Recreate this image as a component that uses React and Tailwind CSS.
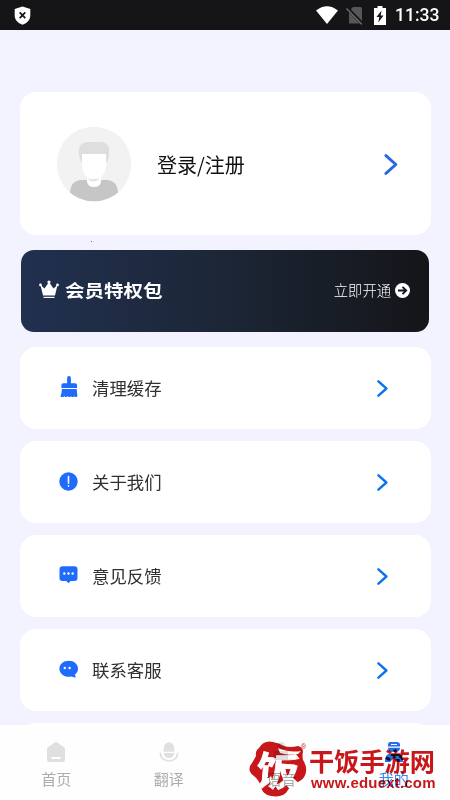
const rows = [
  { label: "清理缓存", icon: BroomIcon },
  { label: "关于我们", icon: AboutIcon },
  { label: "意见反馈", icon: FeedbackIcon },
  { label: "联系客服", icon: ServiceIcon },
];

const tabs = [
  { label: "首页", icon: HomeIcon },
  { label: "翻译", icon: MicIcon },
  { label: "语音", icon: VoiceIcon },
  { label: "我的", icon: UserIcon, active: true },
];

function BroomIcon() {
  return (
    <svg className="h-[22px] w-[18px]" viewBox="0 0 19 22" fill="#1f6bfb">
      <path d="M7.500 1.500a2 2 0 0 1 4 0V7H16a2 2 0 0 1 2 2v3H1.500V9a2 2 0 0 1 2-2h4Z" />
      <path d="M2 13.200h15.600l.7 7q0 1.300-1 1.300h-1.600l-.7-1-.8 1h-2l-.7-1-.7 1h-2l-.7-1-.8 1h-2l-.7-1-.8 1H1.500Q.2 21.500.6 20.200 2 17.500 2 13.200Z" />
    </svg>
  );
}

function AboutIcon() {
  return (
    <svg className="size-[19px]" viewBox="0 0 19 19">
      <circle cx="9.500" cy="9.500" r="9.200" fill="#1f6bfb" />
      <path d="M9.500 4.500v6.800M9.500 13.700v.6" stroke="#fff" strokeWidth="1.600" strokeLinecap="round" />
    </svg>
  );
}

function FeedbackIcon() {
  return (
    <svg className="h-[18px] w-[19px]" viewBox="0 0 19 18">
      <path d="M3.500.3h12a3 3 0 0 1 3 3V12a3 3 0 0 1-3 3h-3.800l-2.200 2.300L7.300 15H3.500a3 3 0 0 1-3-3V3.300a3 3 0 0 1 3-3Z" fill="#1f6bfb" />
      <g fill="#fff">
        <circle cx="5.300" cy="7.500" r="1.200" />
        <circle cx="9.500" cy="7.500" r="1.200" />
        <circle cx="13.700" cy="7.500" r="1.200" />
      </g>
    </svg>
  );
}

function ServiceIcon() {
  return (
    <svg className="h-[19px] w-5" viewBox="0 0 20 19">
      <path d="M9.800.7c5.200 0 9.200 3.500 9.200 8 0 2.500-1.100 4.300-3 5.800l.7 3.200-4.300-1.200c-6.300 1.300-12-2.500-12-7.800C.4 4.200 4.600.7 9.800.7Z" fill="#1f6bfb" />
      <circle cx="5.800" cy="8" r="1.200" fill="#fff" />
      <circle cx="10.600" cy="8" r="1.200" fill="#fff" />
    </svg>
  );
}

function HomeIcon() {
  return (
    <svg className="h-5 w-[18px]" viewBox="0 0 18 20">
      <path d="M7.700.6q1.300-.8 2.600 0l6.400 4.300q1.300.9 1.300 2.400v10.200q0 2.500-2.500 2.500h-13Q0 20 0 17.500V7.300q0-1.500 1.300-2.400Z" fill="#e0e0e0" />
      <rect x="4.300" y="15" width="9.400" height="2" fill="#fff" />
    </svg>
  );
}

function MicIcon() {
  return (
    <svg className="h-5 w-5" viewBox="0 0 20 20">
      <path d="M4.700 9.700V6a5.300 5.700 0 0 1 10.600 0v3.700ZM4.700 11h10.600q-.6 5-5.300 5t-5.300-5Z" fill="#e0e0e0" />
      <path d="M1.300 10.800q.5 8 8.700 8.200 8.200-.2 8.700-8.200" fill="none" stroke="#e0e0e0" strokeWidth="1.700" />
    </svg>
  );
}

function VoiceIcon() {
  return (
    <svg className="h-5 w-5" viewBox="0 0 20 20" fill="#dedede">
      <circle cx="10" cy="4" r="4" />
      <path d="M3 9h14v9H3z" />
    </svg>
  );
}

function UserIcon() {
  return (
    <svg className="h-5 w-[18px]" viewBox="0 0 18 20">
      <path d="M5 0h7q2.500 0 3 2v2.500H3V2q.5-2 2-2ZM3 5.700h12q.3 4.300-6 4.300T3 5.700Z" fill="#256fec" />
      <path d="M6 2.500h6" stroke="#fff" strokeWidth="1" />
      <path d="M3.500 12h11q3.500 1.500 3.500 7v1h-5l-4-4-4 4H0v-1q0-5.500 3.500-7Z" fill="#256fec" />
    </svg>
  );
}

function Chevron({ className }) {
  return (
    <svg className={className} viewBox="0 0 13 20" fill="none" stroke="currentColor" strokeWidth="2.800" strokeLinecap="round" strokeLinejoin="round">
      <path d="m1.700 1.500 9.400 8.500-9.400 8.500" />
    </svg>
  );
}

function StatusBar() {
  return (
    <header className="flex h-[30px] shrink-0 items-center bg-[#151517] pr-[10px] pl-[14px] text-white">
      <svg className="mr-auto h-[19px] w-[17px]" viewBox="0 0 17 19">
        <path d="M8.500.4 16.300 3v6.500c0 4.300-3.100 7.600-7.800 9.200-4.700-1.600-7.800-4.900-7.800-9.200V3Z" fill="#fff" />
        <path d="m5.700 6.300 5.600 5.800m0-5.800-5.600 5.800" stroke="#151517" strokeWidth="1.700" />
      </svg>
      <svg className="mr-[8px] h-[18px] w-[22px]" viewBox="0 0 22 18">
        <path d="M0 4.500q11-8.500 22 0L11 18Z" fill="#fff" />
      </svg>
      <svg className="mr-[10px] h-[19px] w-[18px]" viewBox="0 0 18 19">
        <path d="M7 1h7.500Q16 1 16 2.500v15H3V5Z" fill="#57575a" />
        <path d="m1 2 15.500 16" stroke="#151517" strokeWidth="3.500" />
        <path d="m.5 2.500 15.500 16" stroke="#6a6a6c" strokeWidth="1.400" />
      </svg>
      <svg className="mr-[9px] h-[19px] w-3" viewBox="0 0 12 19">
        <path d="M3.500 0h5v2H12v17H0V2h3.500Z" fill="#fff" />
        <path d="M7.500 4.500 2.500 11h2.800l-1 5.500 5.200-7H6.700Z" fill="#151517" />
      </svg>
      <span className="w-[45px] pt-[2px] font-[Roboto] text-[17.500px] leading-none font-medium whitespace-nowrap">11:33</span>
    </header>
  );
}

function Avatar() {
  return (
    <svg className="size-[76px]" viewBox="0 0 76 76">
      <clipPath id="avatar">
        <circle cx="38" cy="38" r="37.300" />
      </clipPath>
      <g clipPath="url(#avatar)">
        <path d="M0 0h76v76H0Z" fill="#f2f2f2" />
        <path d="M25 36q-3-8-2-13 1-7 10-7h11q9 0 9 8 .5 6-1.500 12Z" fill="#dedede" />
        <path d="M14 76V66q1-11 10-12h28q9 1 10 12v10Z" fill="#c6c6c6" />
        <path d="M31 49h14v7q-1 5-7 5t-7-5Z" fill="#fff" />
        <path d="M32 52q6 3 12-1l-2 3q-5 3-9 0Z" fill="#e3e3e3" />
        <path d="M26 28h24v11q-1 14-12 14T26 39Z" fill="#fff" />
      </g>
    </svg>
  );
}

function Watermark() {
  return (
    <div className="absolute top-[14px] left-[249px] flex h-[59px] w-[195px] mix-blend-multiply">
      <svg className="h-[58px] w-[60px] shrink-0 overflow-visible" viewBox="0 0 60 58">
        <path d="M10 9Q15 1 24 3q6 1 11 4 6 2 14 0 5 1 5 6-1 3 0 8 4 6 3 12-1 7-8 10-7 3-10 8-4 8-17 6-8-1-10-9-2-7-7-11-6-4-4-10 4-6 6-10-1-5 3-8Z" fill="#c9171b" />
        <path d="M29 9q12 5 23 3l-3 3q-10 2-18-1Z" fill="#fff" />
        <path d="M43 38q6 5 12 12-7 0-15-7Z" fill="#fff" />
        <text x="8" y="47" fill="#fff" stroke="#fff" strokeWidth=".8" fontSize="39" fontWeight="700" fontFamily="Noto Sans CJK SC, sans-serif" transform="rotate(5 30 30)" textLength="43" lengthAdjust="spacingAndGlyphs">饭</text>
        <text x="52" y="10" fill="#c9171b" fontSize="7" fontFamily="Liberation Sans, sans-serif">®</text>
      </svg>
      <div className="flex flex-col text-[#c9171b]">
        <span className="mt-[7px] text-[25.200px] leading-[28px] font-bold whitespace-nowrap">干饭手游网</span>
        <span className="ml-[2px] font-['Liberation_Sans'] text-[15px] leading-[18px] font-bold tracking-[0.200px]">www.eduext.com</span>
      </div>
    </div>
  );
}

export default function App() {
  return (
    <div className="flex h-[800px] w-[450px] flex-col overflow-hidden bg-[#f2f3fe] font-['Noto_Sans_CJK_SC',sans-serif]">
      <StatusBar />

      <main className="min-h-0 flex-1 overflow-hidden pt-[62px] pr-[19px] pl-5">
        <section className="flex h-[143px] items-center rounded-[16px] bg-white pr-[33px] pl-9">
          <Avatar />
          <span className="ml-[25px] pt-[2px] text-[20px] text-[#111]">登录/注册</span>
          <Chevron className="mt-[2px] ml-auto h-[21px] w-[14px] text-[#2468e8]" />
        </section>
        <div className="mt-[6px] ml-[71px] size-px bg-gray-500" />

        <section className="mr-[2px] ml-px mt-[8px] flex h-[82px] items-center rounded-[13px] bg-linear-to-r from-[#20304f] via-[#1c2636] to-[#141519] pr-[19px] pb-[2px] pl-[18px] text-white">
          <svg className="-mt-[2px] h-[19px] w-5" viewBox="0 0 20 19" fill="#fff">
            <path d="m1.500 5 4 3.500L10 2l4.500 6.500 4-3.500L16 15.500H4Z" />
            <circle cx="1.500" cy="5" r="1.400" />
            <circle cx="10" cy="2" r="1.600" />
            <circle cx="18.500" cy="5" r="1.400" />
            <path d="M4.500 16.800h11V18h-11Z" />
          </svg>
          <span className="ml-[6px] origin-center scale-y-90 text-[19.500px] leading-none font-bold">会员特权包</span>
          <span className="ml-auto text-[14.300px] font-light">立即开通</span>
          <svg className="ml-[4px] size-[15px]" viewBox="0 0 15 15">
            <circle cx="7.500" cy="7.500" r="7.500" fill="#fff" />
            <path d="M3 7.500h8M7.500 3.800l3.700 3.700-3.700 3.700" fill="none" stroke="#15171c" strokeWidth="1.900" />
          </svg>
        </section>

        <div className="mt-[15px] flex flex-col gap-[12.500px]">
          {rows.map(({ label, icon: Icon }) => (
            <div key={label} className="flex h-[81.500px] shrink-0 items-center rounded-[16px] bg-white pr-[43px] pl-[38.500px]">
              <div className="-mt-px flex w-5 justify-center">
                <Icon />
              </div>
              <span className="ml-[13.500px] text-[17.400px] text-[#303030]">{label}</span>
              <Chevron className="mt-px ml-auto h-[17px] w-[11px] text-[#0a73f0]" />
            </div>
          ))}
          <div className="h-[81px] rounded-[16px] bg-white" />
        </div>
      </main>

      <nav className="relative flex h-[75px] shrink-0 bg-[#fefefe]">
        {tabs.map(({ label, icon: Icon, active }) => (
          <div key={label} className={`flex flex-1 flex-col items-center pt-[17px] ${active ? "text-[#4583eb]" : "text-[#acacac]"}`}>
            <Icon />
            <span className="mt-[7px] text-[15px] leading-[20px]">{label}</span>
          </div>
        ))}
        <Watermark />
      </nav>
    </div>
  );
}
